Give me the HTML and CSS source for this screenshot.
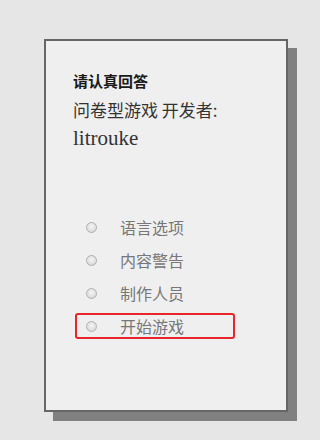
FILE: index.html
```html
<!DOCTYPE html>
<html>
<head>
<meta charset="utf-8">
<link rel="stylesheet" href="styles.css">
</head>
<body>
<div class="card">
  <div class="intro">
    <div class="title">请认真回答</div>
    <div class="sub">问卷型游戏 开发者:</div>
    <div class="author">litrouke</div>
  </div>
  <ul class="menu">
    <li class="item"><span class="radio"></span><span class="label">语言选项</span></li>
    <li class="item"><span class="radio"></span><span class="label">内容警告</span></li>
    <li class="item"><span class="radio"></span><span class="label">制作人员</span></li>
    <li class="item selected"><span class="radio"></span><span class="label">开始游戏</span></li>
  </ul>
</div>
</body>
</html>
```
FILE: styles.css
```css
html, body {
  margin: 0;
  padding: 0;
  background: #e6e6e6;
  width: 320px;
  height: 440px;
  overflow: hidden;
}
.card {
  box-sizing: border-box;
  margin: 39px 0 0 44px;
  width: 244px;
  height: 373px;
  background: #efefef;
  border: 2px solid #666;
  box-shadow: 9px 9px 0 #808080;
  padding: 25px 0 0 27px;
}
.intro {
  font-family: "Liberation Serif", "Noto Sans CJK SC", serif;
  color: #222;
  line-height: 29px;
}
.title {
  font-family: "Noto Sans CJK SC", serif;
  font-weight: bold;
  font-size: 15px;
  color: #1a1a1a;
}
.sub {
  font-family: "Noto Sans CJK SC", serif;
  font-size: 17px;
  color: #333;
}
.author {
  font-size: 21px;
  color: #333;
}
.menu {
  list-style: none;
  margin: 61px 0 0 2px;
  padding: 0;
  display: flex;
  flex-direction: column;
  gap: 7px;
}
.item {
  box-sizing: border-box;
  width: 160px;
  height: 26px;
  border: 2px solid transparent;
  border-radius: 3px;
  display: flex;
  align-items: center;
  padding-left: 9px;
}
.item.selected {
  border-color: #e8262a;
}
.radio {
  box-sizing: border-box;
  width: 11px;
  height: 11px;
  border-radius: 50%;
  border: 1px solid #b0b0b0;
  background: radial-gradient(circle at 50% 40%, #f4f4f4 0%, #e0e0e0 60%, #cdcdcd 100%);
  flex: none;
}
.label {
  margin-left: 23px;
  font-family: "Noto Sans CJK SC", sans-serif;
  font-size: 16px;
  color: #777;
  line-height: 22px;
}
```
